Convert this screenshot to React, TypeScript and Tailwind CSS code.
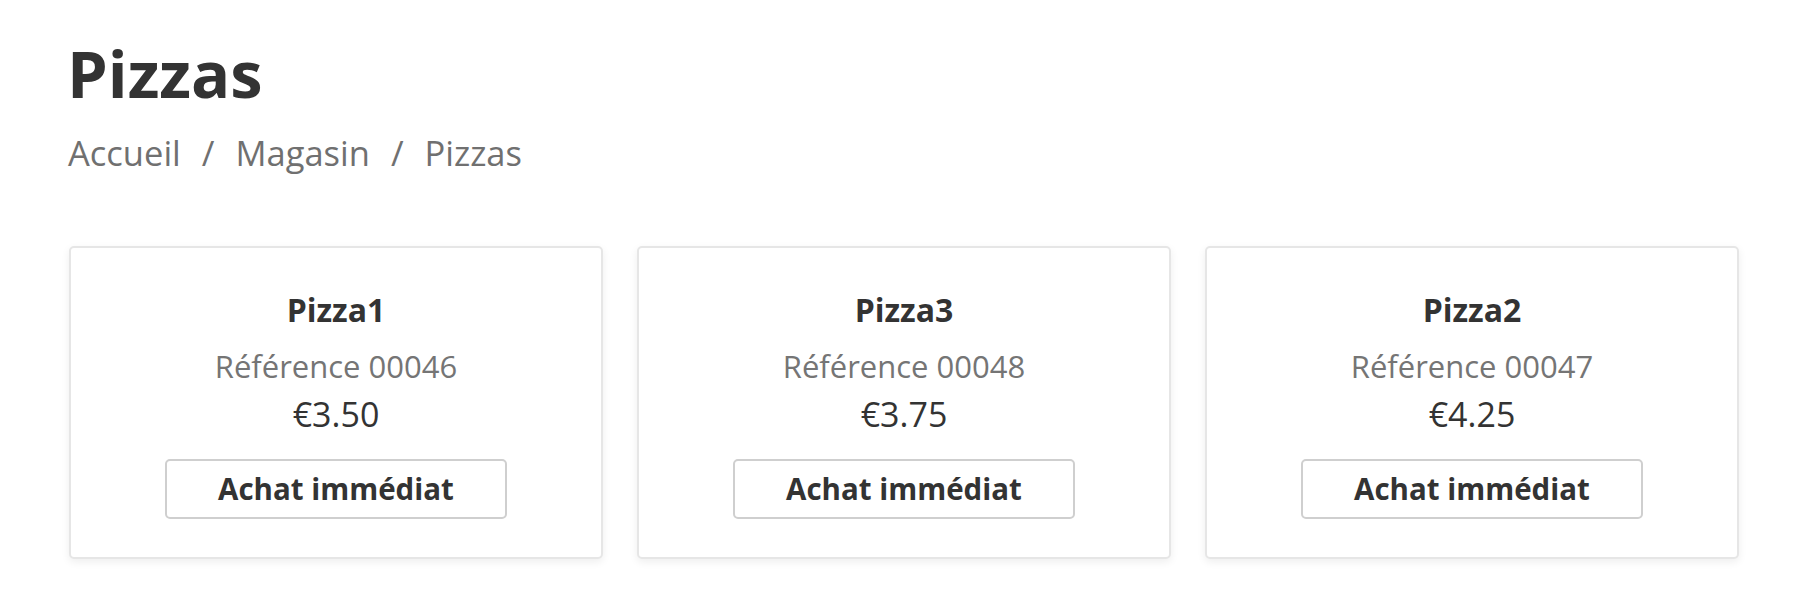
import React from "react";

const pizzas = [
  { name: "Pizza1", ref: "00046", price: "€3.50" },
  { name: "Pizza3", ref: "00048", price: "€3.75" },
  { name: "Pizza2", ref: "00047", price: "€4.25" },
];

export default function App() {
  return (
    <div className="min-h-[614px] w-[1800px] bg-white font-['Open_Sans',sans-serif] text-[#333333]">
      <div className="pl-[69px] pr-[61px] pt-[36px]">
        <h1 className="-ml-[2px] text-[65px] font-bold leading-[74px] text-[#333333]">Pizzas</h1>
        <nav className="mt-[19px] flex items-center gap-[21px] text-[34.5px] leading-[48px] text-[#707070]">
          <span className="-ml-[1px]">Accueil</span>
          <span>/</span>
          <span>Magasin</span>
          <span>/</span>
          <span>Pizzas</span>
        </nav>
        <div className="mt-[69px] grid grid-cols-3 gap-[34px]">
          {pizzas.map((p) => (
            <div
              key={p.name}
              className="flex flex-col items-center rounded-[5px] border-2 border-[#e6e6e6] bg-white pb-[38px] pt-[42px] shadow-[0_3px_8px_rgba(0,0,0,0.07)]"
            >
              <div className="text-[32px] font-bold leading-[40px] text-[#333333]">{p.name}</div>
              <div className="mt-[16px] text-[31px] leading-[40px] text-[#757575]">Référence {p.ref}</div>
              <div className="mt-[8px] text-[34px] leading-[40px] text-[#333333]">{p.price}</div>
              <button className="mt-[25px] flex h-[60px] w-[342px] items-center justify-center rounded-[5px] border-2 border-[#cfcfcf] bg-white text-[29.5px] font-bold leading-[40px] text-[#333333]">
                Achat immédiat
              </button>
            </div>
          ))}
        </div>
      </div>
    </div>
  );
}
